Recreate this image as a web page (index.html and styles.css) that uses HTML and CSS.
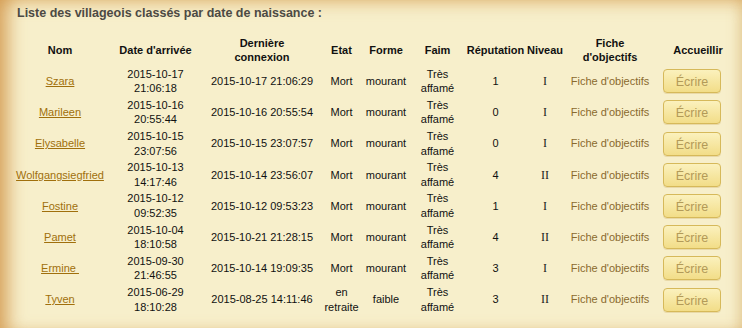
FILE: index.html
```html
<!DOCTYPE html>
<html lang="fr">
<head>
<meta charset="utf-8">
<title>Villageois</title>
<link rel="stylesheet" href="styles.css">
</head>
<body>
<div class="page">
  <h2 class="title">Liste des villageois classés par date de naissance :</h2>
  <table class="list">
    <colgroup>
      <col class="c-nom"><col class="c-date"><col class="c-conn"><col class="c-etat"><col class="c-forme"><col class="c-faim"><col class="c-rep"><col class="c-niv"><col class="c-fiche"><col class="c-acc">
    </colgroup>
    <thead>
      <tr>
        <th>Nom</th><th>Date d'arrivée</th><th>Dernière<br>connexion</th><th>Etat</th><th>Forme</th><th>Faim</th><th>Réputation</th><th>Niveau</th><th>Fiche<br>d'objectifs</th><th>Accueillir</th>
      </tr>
    </thead>
    <tbody>
      <tr>
        <td><a class="name" href="#">Szara</a></td><td>2015-10-17<br>21:06:18</td><td>2015-10-17 21:06:29</td><td>Mort</td><td>mourant</td><td>Très<br>affamé</td><td>1</td><td class="roman">I</td><td><a class="fiche" href="#">Fiche d'objectifs</a></td><td class="acc"><button class="btn" type="button">Écrire</button></td>
      </tr>
      <tr>
        <td><a class="name" href="#">Marileen</a></td><td>2015-10-16<br>20:55:44</td><td>2015-10-16 20:55:54</td><td>Mort</td><td>mourant</td><td>Très<br>affamé</td><td>0</td><td class="roman">I</td><td><a class="fiche" href="#">Fiche d'objectifs</a></td><td class="acc"><button class="btn" type="button">Écrire</button></td>
      </tr>
      <tr>
        <td><a class="name" href="#">Elysabelle</a></td><td>2015-10-15<br>23:07:56</td><td>2015-10-15 23:07:57</td><td>Mort</td><td>mourant</td><td>Très<br>affamé</td><td>0</td><td class="roman">I</td><td><a class="fiche" href="#">Fiche d'objectifs</a></td><td class="acc"><button class="btn" type="button">Écrire</button></td>
      </tr>
      <tr>
        <td><a class="name" href="#">Wolfgangsiegfried</a></td><td>2015-10-13<br>14:17:46</td><td>2015-10-14 23:56:07</td><td>Mort</td><td>mourant</td><td>Très<br>affamé</td><td>4</td><td class="roman">II</td><td><a class="fiche" href="#">Fiche d'objectifs</a></td><td class="acc"><button class="btn" type="button">Écrire</button></td>
      </tr>
      <tr>
        <td><a class="name" href="#">Fostine</a></td><td>2015-10-12<br>09:52:35</td><td>2015-10-12 09:53:23</td><td>Mort</td><td>mourant</td><td>Très<br>affamé</td><td>1</td><td class="roman">I</td><td><a class="fiche" href="#">Fiche d'objectifs</a></td><td class="acc"><button class="btn" type="button">Écrire</button></td>
      </tr>
      <tr>
        <td><a class="name" href="#">Pamet</a></td><td>2015-10-04<br>18:10:58</td><td>2015-10-21 21:28:15</td><td>Mort</td><td>mourant</td><td>Très<br>affamé</td><td>4</td><td class="roman">II</td><td><a class="fiche" href="#">Fiche d'objectifs</a></td><td class="acc"><button class="btn" type="button">Écrire</button></td>
      </tr>
      <tr>
        <td><a class="name" href="#">Ermine&nbsp;</a></td><td>2015-09-30<br>21:46:55</td><td>2015-10-14 19:09:35</td><td>Mort</td><td>mourant</td><td>Très<br>affamé</td><td>3</td><td class="roman">I</td><td><a class="fiche" href="#">Fiche d'objectifs</a></td><td class="acc"><button class="btn" type="button">Écrire</button></td>
      </tr>
      <tr>
        <td><a class="name" href="#">Tyven</a></td><td>2015-06-29<br>18:10:28</td><td>2015-08-25 14:11:46</td><td>en<br>retraite</td><td>faible</td><td>Très<br>affamé</td><td>3</td><td class="roman">II</td><td><a class="fiche" href="#">Fiche d'objectifs</a></td><td class="acc"><button class="btn" type="button">Écrire</button></td>
      </tr>
    </tbody>
  </table>
</div>
</body>
</html>
```

FILE: styles.css
```css
html, body {
  margin: 0;
  padding: 0;
}

body {
  font-family: "Liberation Sans", Arial, sans-serif;
  font-size: 11px;
  color: #111;
  background: #f7efcb;
}

.page {
  width: 742px;
  height: 328px;
  box-sizing: border-box;
  padding: 6px 2px 0 12px;
  overflow: hidden;
  background-color: #f7efcb;
  box-shadow:
    inset 16px 0 18px -8px rgba(205, 140, 60, 0.75),
    inset 0 12px 16px -8px rgba(215, 160, 80, 0.45),
    inset -10px 0 12px -6px rgba(215, 175, 110, 0.45);
}

.title {
  margin: 0 0 13.5px 0;
  padding-left: 5px;
  font-size: 12.5px;
  line-height: 15px;
  font-weight: bold;
  color: #4c4a44;
}

.list {
  table-layout: fixed;
  width: 728px;
  border-collapse: separate;
  border-spacing: 0;
}

.c-nom { width: 96px; }
.c-date { width: 95px; }
.c-conn { width: 118px; }
.c-etat { width: 41px; }
.c-forme { width: 48px; }
.c-faim { width: 55px; }
.c-rep { width: 61px; }
.c-niv { width: 38px; }
.c-fiche { width: 92px; }
.c-acc { width: 84px; }

.list th,
.list td {
  padding: 1px 0;
  line-height: 14.6px;
  text-align: center;
  vertical-align: middle;
  white-space: nowrap;
}

.list th {
  font-weight: bold;
  color: #111;
}

.list td.roman {
  font-family: "Liberation Serif", "Times New Roman", serif;
  font-size: 12px;
  color: #222;
}

.name {
  color: #a06f0c;
  text-decoration: underline;
}

.fiche {
  color: #8a6a2e;
  text-decoration: none;
}

.list td.acc {
  text-align: left;
  padding-left: 7px;
}

.btn {
  display: block;
  width: 58px;
  height: 24px;
  margin: 0;
  padding: 2px 0 0 0;
  border: 1px solid #d6b95a;
  border-radius: 4px;
  background: linear-gradient(#fbf1bd, #f2dd88);
  box-shadow: 0 1px 0 rgba(190, 150, 60, 0.25);
  font-family: "Liberation Sans", Arial, sans-serif;
  font-size: 12.5px;
  color: #b39a58;
  text-align: center;
}
```
